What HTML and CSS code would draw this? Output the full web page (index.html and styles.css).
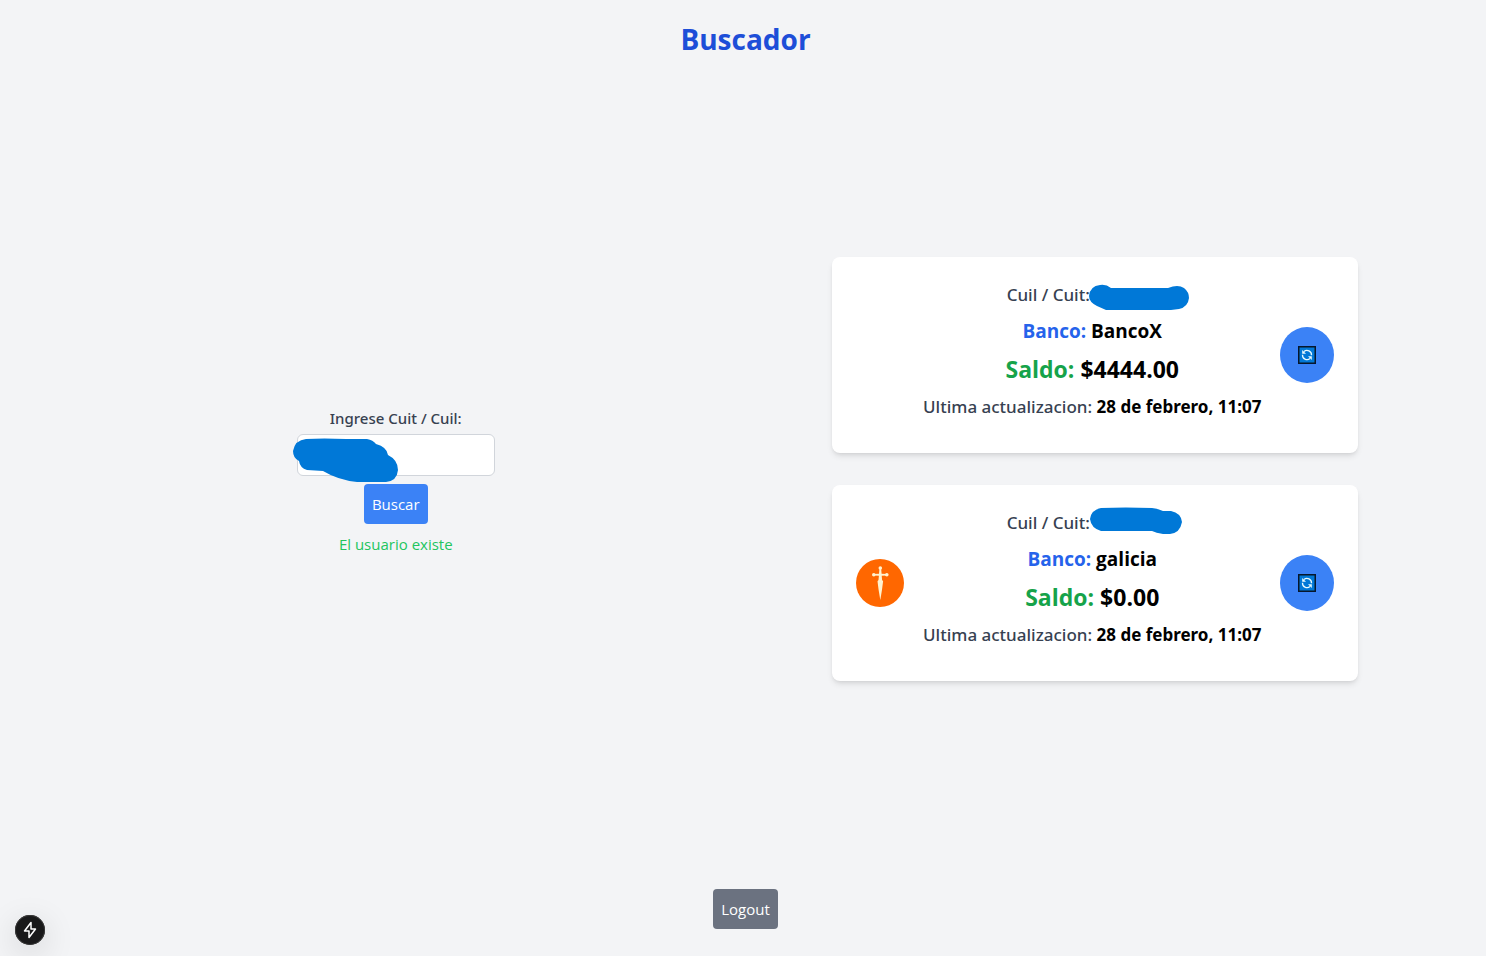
FILE: index.html
```html
<!DOCTYPE html>
<html lang="es">
<head>
<meta charset="utf-8">
<meta name="viewport" content="width=device-width, initial-scale=1">
<title>Buscador</title>
<link rel="stylesheet" href="styles.css">
</head>
<body>
<div class="page">
  <header><h1 class="title">Buscador</h1></header>
  <main class="content">
    <form class="search">
      <label class="search-label" for="cuit">Ingrese Cuit / Cuil:</label>
      <div class="field">
        <input class="search-input" id="cuit" type="text">
        <svg class="scribble scribble-field" width="105" height="45" viewBox="0 0 105 45" aria-hidden="true"><path d="M13 1Q30 0 53 1H74Q80 2 83 6Q94 9 95 17Q105 22 105 32Q104 43 93 44H64Q45 42 30 33L14 32Q7 30 6 23Q0 20 0 13Q2 2 13 1Z"/></svg>
      </div>
      <button class="button" type="button">Buscar</button>
      <p class="status">El usuario existe</p>
    </form>
    <section class="accounts">
      <article class="card">
        <div class="logo"></div>
        <div class="details">
          <p class="line id-line">Cuil / Cuit:<span class="redacted"><svg class="scribble scribble-first" width="100" height="27" viewBox="0 0 100 27" aria-hidden="true"><path d="M11 1Q17 0 22 4H79Q89 0 95 4Q100 8 100 14Q99 23 90 25L82 26H17L8 22Q0 18 0 12Q1 2 11 1Z"/></svg></span></p>
          <p class="line bank"><span class="blue">Banco:</span> BancoX</p>
          <p class="line balance"><span class="green">Saldo:</span> $4444.00</p>
          <p class="line updated">Ultima actualizacion: <strong>28 de febrero, 11:07</strong></p>
        </div>
        <button class="refresh" type="button" aria-label="Actualizar">
          <svg width="18" height="18" viewBox="0 0 18 18"><path fill="#0078d7" stroke="#07172b" stroke-width="1.5" d="M.75.75h16.5v16.5H.75z"/><path fill="none" stroke="#e8faff" stroke-width="1.3" d="M6 5.4A4.6 4.6 0 0 1 13.5 9.3M12 12.6A4.6 4.6 0 0 1 4.5 8.7"/><path fill="#e8faff" d="M4.2 4v3.8H8zM13.8 14v-3.8H10z"/></svg>
        </button>
      </article>
      <article class="card">
        <div class="logo">
          <svg width="48" height="48" viewBox="0 0 48 48" role="img" aria-label="Galicia"><circle cx="24" cy="24" r="24" fill="#ff6700"/><g fill="#fff2cf"><circle cx="24.3" cy="9" r="1.8"/><circle cx="17.8" cy="15.8" r="1.8"/><circle cx="30.8" cy="15.8" r="1.8"/><path d="M23.5 9h1.6l.5 5.8 5.2.3v1.4l-5.1.3.4 4.1 1 1.3-1.1 8.6-1.7 10.2-1.7-10.2-1.1-8.6 1-1.3.4-4.1-5.1-.3v-1.4l5.2-.3z"/></g></svg>
        </div>
        <div class="details">
          <p class="line id-line">Cuil / Cuit:<span class="redacted"><svg class="scribble scribble-second" width="92" height="27" viewBox="0 0 92 27" aria-hidden="true"><path d="M11 1Q35 0 62 1Q69 2 73 4H81Q91 6 92 15Q90 26 80 27H73Q66 26 62 24H11Q1 21 0 12Q1 3 11 1Z"/></svg></span></p>
          <p class="line bank"><span class="blue">Banco:</span> galicia</p>
          <p class="line balance"><span class="green">Saldo:</span> $0.00</p>
          <p class="line updated">Ultima actualizacion: <strong>28 de febrero, 11:07</strong></p>
        </div>
        <button class="refresh" type="button" aria-label="Actualizar">
          <svg width="18" height="18" viewBox="0 0 18 18"><path fill="#0078d7" stroke="#07172b" stroke-width="1.5" d="M.75.75h16.5v16.5H.75z"/><path fill="none" stroke="#e8faff" stroke-width="1.3" d="M6 5.4A4.6 4.6 0 0 1 13.5 9.3M12 12.6A4.6 4.6 0 0 1 4.5 8.7"/><path fill="#e8faff" d="M4.2 4v3.8H8zM13.8 14v-3.8H10z"/></svg>
        </button>
      </article>
    </section>
  </main>
  <footer><button class="button logout" type="button">Logout</button></footer>
</div>
<button class="devtools" type="button" aria-label="Herramientas">
  <svg width="16" height="18" viewBox="0 0 16 18"><path fill="none" stroke="#fff" stroke-width="1.5" stroke-linejoin="round" d="M9 1.5 2.5 10H7v6.5L13.5 8H9z"/></svg>
</button>
</body>
</html>
```
FILE: styles.css
```css
* { box-sizing: border-box; }
body {
  margin: 0;
  background: #f3f4f6;
  color: #000;
  font: 15px/24px "Open Sans", "Noto Sans", sans-serif;
}
p, h1 { margin: 0; }
button, input { font: inherit; }
button { border: 0; cursor: pointer; }
svg { display: block; }

.page {
  min-height: 100vh;
  padding: 21px 0 27px 5px;
  display: flex;
  flex-direction: column;
}
header, footer { display: flex; justify-content: center; }
.title { font-size: 28px; line-height: 36px; font-weight: 700; color: #1d4ed8; }
.content {
  flex: 1;
  display: grid;
  grid-template-columns: 1fr 1fr;
  gap: 32px;
  align-items: center;
  padding: 0 57px 8px;
}

.search {
  display: flex;
  flex-direction: column;
  align-items: center;
  padding-top: 24px;
}
.search-label {
  margin-bottom: 4px;
  font-family: "Noto Sans", "Open Sans", sans-serif;
  font-weight: 500;
  color: #374151;
}
.field { position: relative; margin-bottom: 8px; }
.search-input {
  display: block;
  width: 198px;
  height: 42px;
  padding: 8px;
  border: 1px solid #d1d5db;
  border-radius: 6px;
  background: #fff;
}
.button {
  padding: 8px;
  border-radius: 4px;
  background: #3b82f6;
  color: #fff;
}
.status { margin-top: 8px; color: #22c55e; }
.logout { background: #6b7280; }

.accounts { display: flex; flex-direction: column; align-items: center; gap: 32px; }
.card {
  width: 100%;
  max-width: 526px;
  padding: 24px;
  display: flex;
  align-items: center;
  gap: 12px;
  border-radius: 8px;
  background: #fff;
  box-shadow: 0 4px 6px -1px rgba(0, 0, 0, .1), 0 2px 4px -2px rgba(0, 0, 0, .1);
}
.logo { flex: 0 0 48px; }
.details { flex: 1; text-align: center; white-space: nowrap; }
.line { margin-bottom: 8px; line-height: 28px; font-size: 17px; }
.id-line, .updated {
  font-family: "Noto Sans", "Open Sans", sans-serif;
  font-weight: 500;
  color: #374151;
}
.bank { font-size: 19px; font-weight: 700; }
.balance { font-size: 23px; line-height: 32px; font-weight: 700; }
.updated strong { font-weight: 700; color: #000; }
.blue { color: #2563eb; }
.green { color: #16a34a; }
.redacted { position: relative; display: inline-block; width: 88px; height: 20px; vertical-align: middle; }
.refresh {
  flex: 0 0 54px;
  height: 56px;
  padding: 0;
  display: flex;
  align-items: center;
  justify-content: center;
  border-radius: 50%;
  background: #3b82f6;
}

.scribble { position: absolute; fill: #0078d7; }
.scribble-field { left: -4px; top: 4px; }
.scribble-first { left: -1px; top: -2px; }
.scribble-second { left: 0; top: -7px; }

.devtools {
  position: fixed;
  left: 15px;
  bottom: 11px;
  width: 30px;
  height: 30px;
  padding: 0;
  display: flex;
  align-items: center;
  justify-content: center;
  border-radius: 50%;
  background: #19191a;
  box-shadow: 0 0 0 1px #3a3a3a inset, 0 8px 32px rgba(0, 0, 0, .15);
}
```
